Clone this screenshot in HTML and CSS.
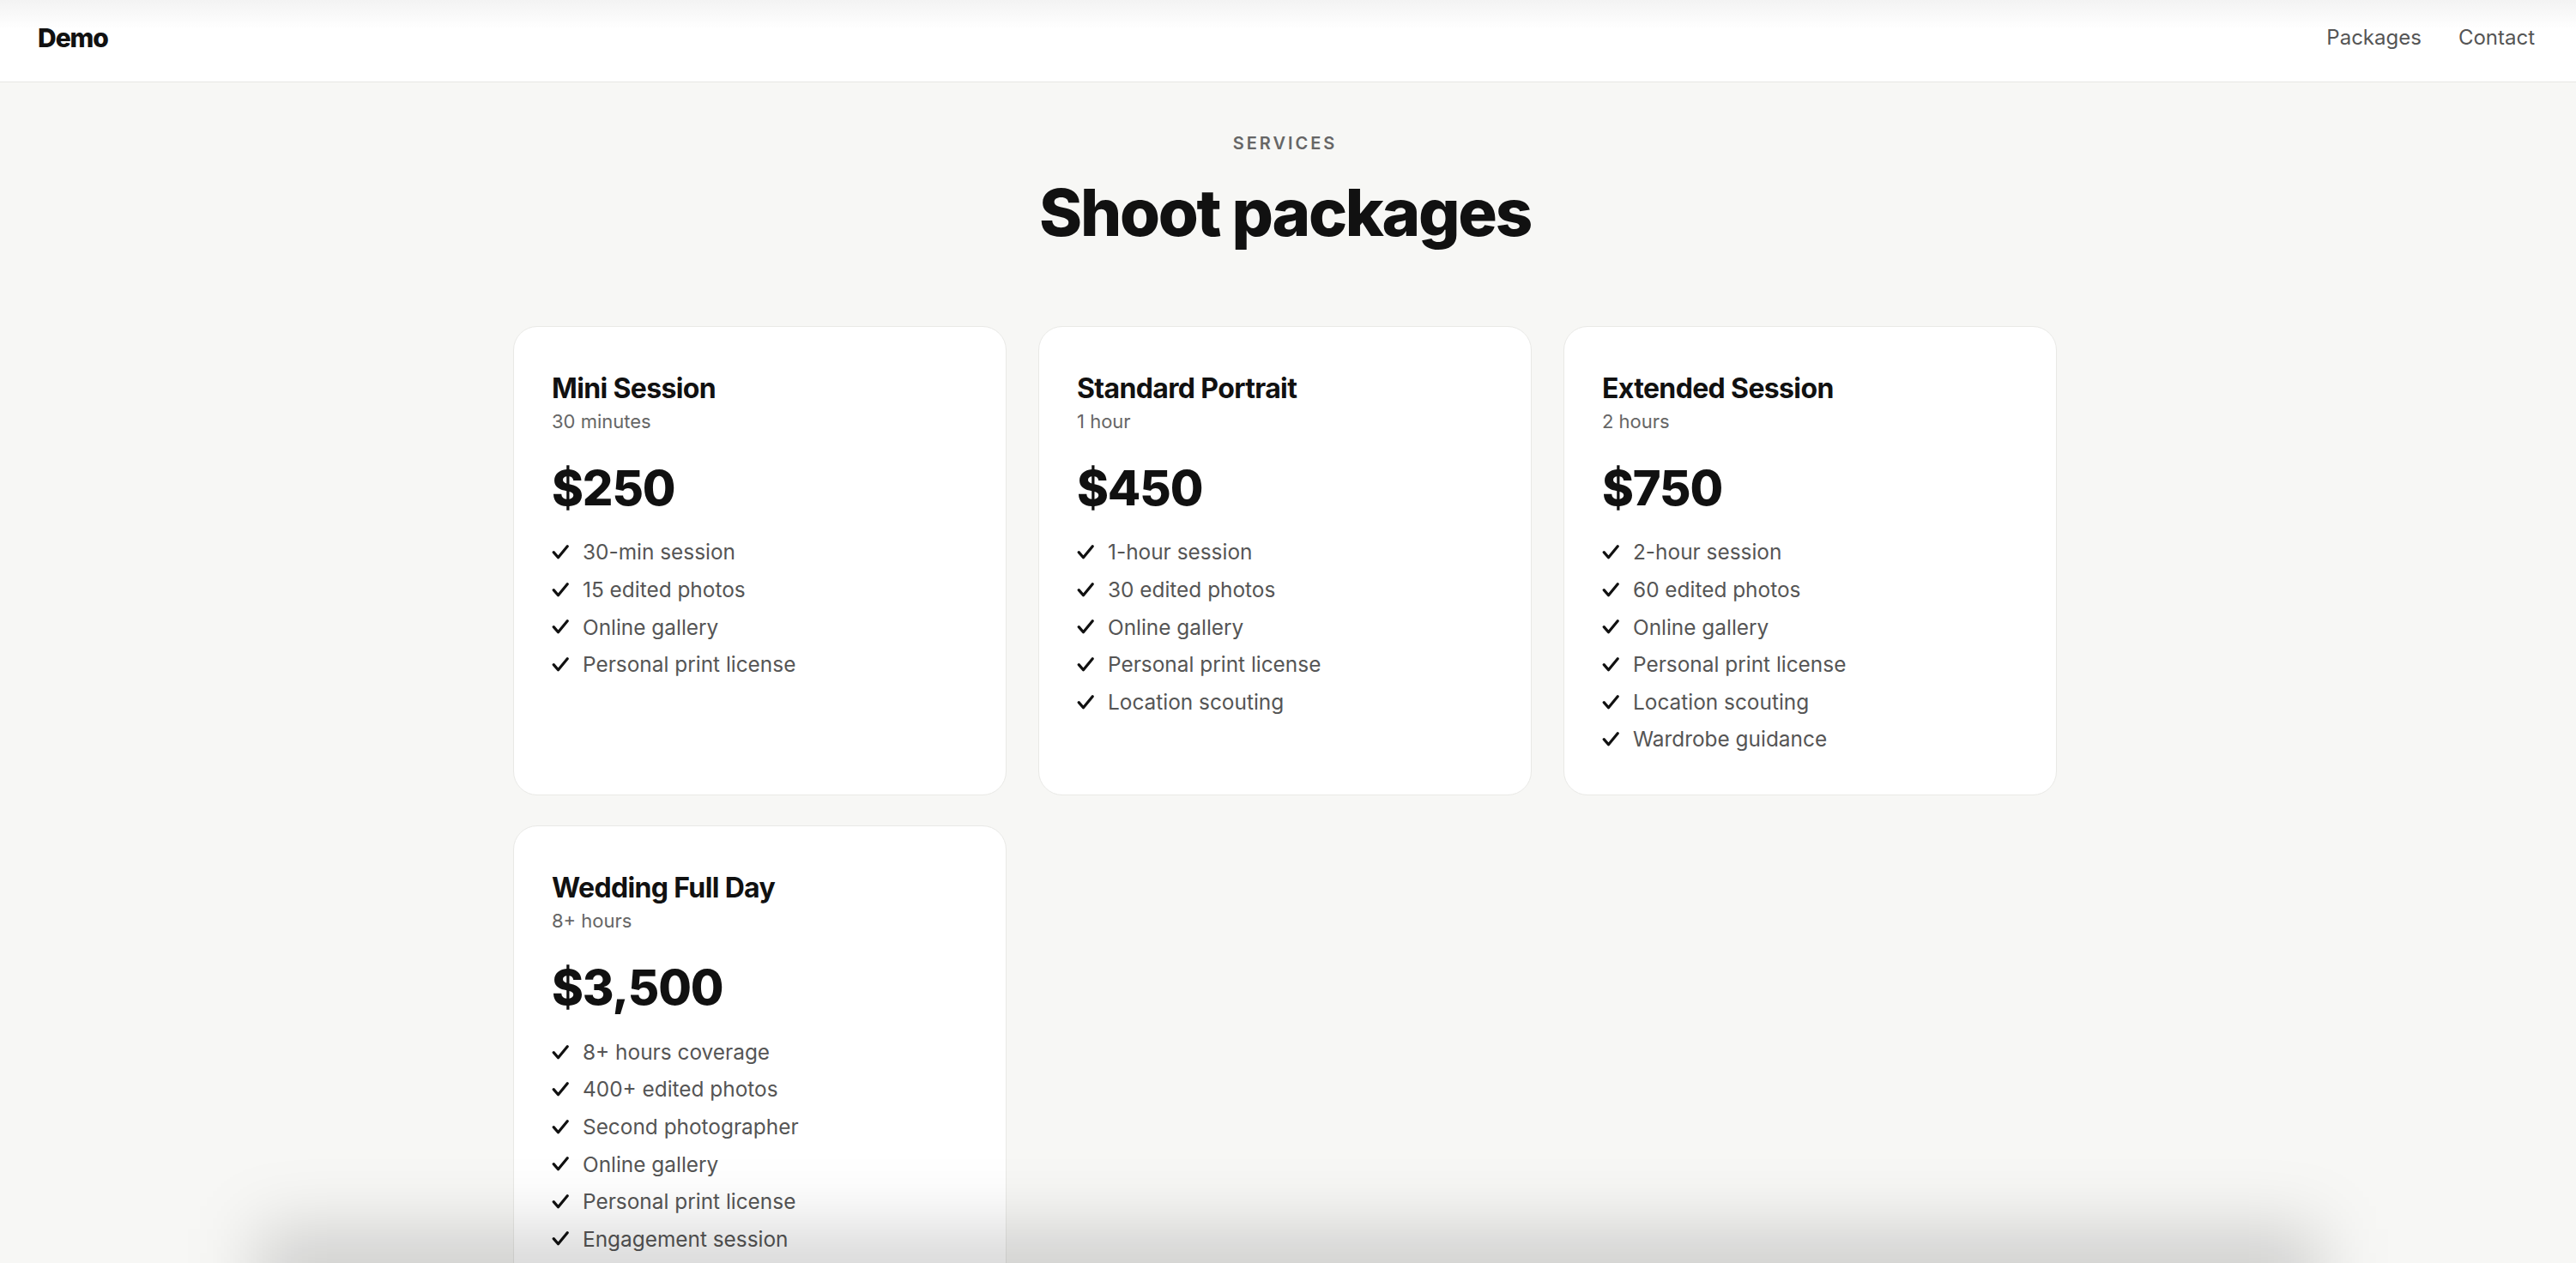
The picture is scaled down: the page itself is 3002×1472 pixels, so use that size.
FILE: index.html
```html
<!DOCTYPE html>
<html lang="en">
<head>
    <meta charset="UTF-8">
    <meta name="viewport" content="width=device-width, initial-scale=1.0">
    <title>Shoot packages</title>
    <link rel="stylesheet" href="styles.css">
</head>
<body>
    <header class="topbar">
        <a class="brand" href="#">Demo</a>
        <nav class="nav">
            <a href="#">Packages</a>
            <a href="#">Contact</a>
        </nav>
    </header>

    <main class="page">
        <p class="eyebrow">SERVICES</p>
        <h1 class="title">Shoot packages</h1>

        <div class="grid">
            <div class="card">
                <h2>Mini Session</h2>
                <p class="duration">30 minutes</p>
                <p class="price">$250</p>
                <ul class="features">
                    <li><svg viewBox="0 0 20 20"><path d="M2.2 9.6l5.3 6.2L18.2 2.8"/></svg>30-min session</li>
                    <li><svg viewBox="0 0 20 20"><path d="M2.2 9.6l5.3 6.2L18.2 2.8"/></svg>15 edited photos</li>
                    <li><svg viewBox="0 0 20 20"><path d="M2.2 9.6l5.3 6.2L18.2 2.8"/></svg>Online gallery</li>
                    <li><svg viewBox="0 0 20 20"><path d="M2.2 9.6l5.3 6.2L18.2 2.8"/></svg>Personal print license</li>
                </ul>
            </div>

            <div class="card">
                <h2>Standard Portrait</h2>
                <p class="duration">1 hour</p>
                <p class="price">$450</p>
                <ul class="features">
                    <li><svg viewBox="0 0 20 20"><path d="M2.2 9.6l5.3 6.2L18.2 2.8"/></svg>1-hour session</li>
                    <li><svg viewBox="0 0 20 20"><path d="M2.2 9.6l5.3 6.2L18.2 2.8"/></svg>30 edited photos</li>
                    <li><svg viewBox="0 0 20 20"><path d="M2.2 9.6l5.3 6.2L18.2 2.8"/></svg>Online gallery</li>
                    <li><svg viewBox="0 0 20 20"><path d="M2.2 9.6l5.3 6.2L18.2 2.8"/></svg>Personal print license</li>
                    <li><svg viewBox="0 0 20 20"><path d="M2.2 9.6l5.3 6.2L18.2 2.8"/></svg>Location scouting</li>
                </ul>
            </div>

            <div class="card">
                <h2>Extended Session</h2>
                <p class="duration">2 hours</p>
                <p class="price">$750</p>
                <ul class="features">
                    <li><svg viewBox="0 0 20 20"><path d="M2.2 9.6l5.3 6.2L18.2 2.8"/></svg>2-hour session</li>
                    <li><svg viewBox="0 0 20 20"><path d="M2.2 9.6l5.3 6.2L18.2 2.8"/></svg>60 edited photos</li>
                    <li><svg viewBox="0 0 20 20"><path d="M2.2 9.6l5.3 6.2L18.2 2.8"/></svg>Online gallery</li>
                    <li><svg viewBox="0 0 20 20"><path d="M2.2 9.6l5.3 6.2L18.2 2.8"/></svg>Personal print license</li>
                    <li><svg viewBox="0 0 20 20"><path d="M2.2 9.6l5.3 6.2L18.2 2.8"/></svg>Location scouting</li>
                    <li><svg viewBox="0 0 20 20"><path d="M2.2 9.6l5.3 6.2L18.2 2.8"/></svg>Wardrobe guidance</li>
                </ul>
            </div>

            <div class="card">
                <h2>Wedding Full Day</h2>
                <p class="duration">8+ hours</p>
                <p class="price">$3,500</p>
                <ul class="features">
                    <li><svg viewBox="0 0 20 20"><path d="M2.2 9.6l5.3 6.2L18.2 2.8"/></svg>8+ hours coverage</li>
                    <li><svg viewBox="0 0 20 20"><path d="M2.2 9.6l5.3 6.2L18.2 2.8"/></svg>400+ edited photos</li>
                    <li><svg viewBox="0 0 20 20"><path d="M2.2 9.6l5.3 6.2L18.2 2.8"/></svg>Second photographer</li>
                    <li><svg viewBox="0 0 20 20"><path d="M2.2 9.6l5.3 6.2L18.2 2.8"/></svg>Online gallery</li>
                    <li><svg viewBox="0 0 20 20"><path d="M2.2 9.6l5.3 6.2L18.2 2.8"/></svg>Personal print license</li>
                    <li><svg viewBox="0 0 20 20"><path d="M2.2 9.6l5.3 6.2L18.2 2.8"/></svg>Engagement session</li>
                </ul>
            </div>
        </div>
    </main>

    <div class="shade"></div>
</body>
</html>
```

FILE: styles.css
```css
body {
    font-family: Inter, "Noto Sans", sans-serif;
    margin: 0;
    background-color: #f7f7f5;
    color: #111;
}
a {
    text-decoration: none;
}
.topbar {
    height: 95px;
    box-sizing: content-box;
    padding: 0 48px 0 44px;
    display: flex;
    justify-content: space-between;
    align-items: center;
    background: linear-gradient(#f3f3f3, #fff 34px);
    border-bottom: 1px solid #e6e6e4;
}
.brand {
    color: #111;
    font-size: 30px;
    font-weight: 800;
    letter-spacing: -0.035em;
    margin-bottom: 8px;
}
.nav {
    display: flex;
    gap: 43px;
    margin-bottom: 8px;
}
.nav a {
    color: #555;
    font-size: 24px;
}
.page {
    padding: 56px 7px 0 0;
    text-align: center;
}
.eyebrow {
    margin: 0;
    font-size: 20px;
    line-height: 30px;
    font-weight: 600;
    letter-spacing: 3px;
    color: #666;
}
.title {
    margin: 24px 0 0;
    font-size: 76px;
    line-height: 1.1;
    font-weight: 800;
    letter-spacing: -0.03em;
}
.grid {
    width: 1799px;
    margin: 90px auto 0;
    display: grid;
    grid-template-columns: repeat(3, 1fr);
    gap: 35px 37px;
    text-align: left;
}
.card {
    background: #fff;
    border: 1px solid #e9e9e6;
    border-radius: 28px;
    padding: 53px 44px 46px;
}
.card h2 {
    margin: 0;
    font-size: 32px;
    line-height: 1.2;
    font-weight: 700;
    letter-spacing: -0.02em;
}
.duration {
    margin: 4px 0 0;
    font-size: 22px;
    line-height: 1.4;
    color: #666;
}
.price {
    margin: 32px 0 0;
    font-size: 56px;
    line-height: 1.1;
    font-weight: 800;
    letter-spacing: -0.02em;
}
.features {
    list-style: none;
    margin: 26px 0 0;
    padding: 0;
    display: flex;
    flex-direction: column;
    gap: 8px;
}
.features li {
    display: flex;
    align-items: center;
    gap: 16px;
    font-size: 24.4px;
    line-height: 35.6px;
    color: #555;
}
.features svg {
    width: 20px;
    height: 20px;
    flex: none;
}
.features path {
    fill: none;
    stroke: #111;
    stroke-width: 3.2;
    stroke-linecap: round;
    stroke-linejoin: round;
}
.shade {
    position: fixed;
    left: 300px;
    right: 300px;
    bottom: -70px;
    height: 110px;
    background: rgba(0, 0, 0, 0.16);
    filter: blur(40px);
    pointer-events: none;
}
```
